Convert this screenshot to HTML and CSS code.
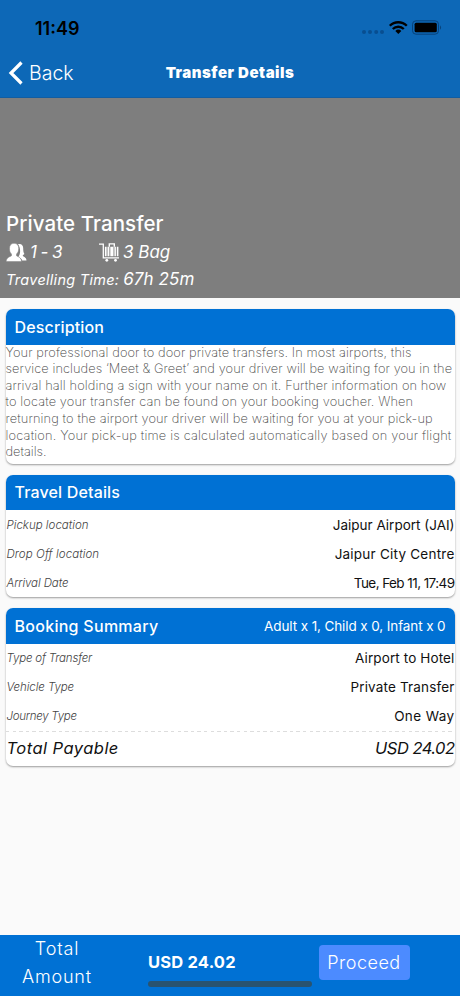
FILE: index.html
```html
<!DOCTYPE html>
<html lang="en">
<head>
<meta charset="utf-8">
<title>Transfer Details</title>
<link rel="stylesheet" href="styles.css">
</head>
<body>
<div class="screen">
  <header class="top">
    <div class="status">
      <span class="clock">11:49</span>
      <svg class="indicators" width="80" height="16" viewBox="0 0 80 16">
        <g fill="#084e91"><circle cx="3" cy="12" r="2"/><circle cx="9" cy="12" r="2"/><circle cx="15.200" cy="12" r="2"/><circle cx="21" cy="12" r="2"/></g>
        <g fill="none" stroke="#000" stroke-width="2.300"><path d="M28.800 5.800a12 12 0 0 1 17 0"/><path d="M31.800 9a7.800 7.800 0 0 1 11 0"/></g>
        <path d="M34.300 10.900a4.300 4.300 0 0 1 6 0l-3 3.100z"/>
        <rect x="51.500" y=".8" width="26" height="13.400" rx="3.500" fill="none" stroke="#07427a"/>
        <rect x="53.600" y="2.800" width="22.200" height="9.500" rx="1.500"/>
        <path d="M79 5.200q2.200 2.300 0 4.600z" fill="#07427a"/>
      </svg>
    </div>
    <div class="nav">
      <div class="back">
        <svg width="14" height="24" viewBox="0 0 14 24"><path d="M12.500 1.500L2 12l10.500 10.500" fill="none" stroke="#fff" stroke-width="3.200"/></svg>
        <span class="back-text">Back</span>
      </div>
      <h1 class="title">Transfer Details</h1>
    </div>
  </header>
  <section class="hero">
    <h2 class="hero-title">Private Transfer</h2>
    <div class="capacity">
      <svg class="people" width="21" height="19" viewBox="0 0 21 19" fill="#fff">
        <path d="M12 1.300c3-1 5.200.7 5.200 4 0 2.300.2 3.900 1 5.200.5.800-.8 1.400-1.500 1.800 0 1.500 3.700 1.700 3.800 5.200h-4.300c-.4-2-2.600-2.600-3.800-3.700 2-2.500 2.700-8.500-.4-12.500z"/>
        <path d="M8 .3c3.200 0 4.700 2.100 4.700 5 0 2.700-.8 4.400-2.200 5.700v1.700c1.600 1.200 4.900 1.500 5 5.900H.2c.1-4.400 3.700-4.700 5.300-5.900V11C4 9.700 3.500 8 3.500 5.300 3.500 2.400 5 .3 8 .3z" stroke="#7e7e7e" stroke-width=".5"/>
      </svg>
      <span class="pax">1 - 3</span>
      <svg class="luggage" width="21" height="19" viewBox="0 0 21 19" fill="#fff">
        <path d="M0 1.200h4.300v13.600H20" fill="none" stroke="#fff" stroke-width="1.300"/>
        <path d="M5.900 3.800h1.700v9.500H5.900zM8.500 3.800h1.900v9.500H8.500zM11.300 3.800h3.200v9.500h-3.200zM15.400 3.800h1.500v9.500h-1.500zM17.800 3.800h1.600v9.500h-1.600z"/>
        <path d="M10.300 3.800V.9h5v2.900" fill="none" stroke="#fff" stroke-width="1.400"/>
        <circle cx="7.800" cy="17.300" r="1.400"/><circle cx="16.500" cy="17.300" r="1.400"/>
      </svg>
      <span class="bags">3 Bag</span>
    </div>
    <div class="travel"><span class="travel-label">Travelling Time:</span><span class="travel-time">67h 25m</span></div>
  </section>
  <main class="content">
    <section class="card">
      <div class="card-head"><h3 class="h-desc">Description</h3></div>
      <p class="desc"><span class="l1">Your professional door to door private transfers. In most airports, this</span><br>
      <span class="l2">service includes ‘Meet &amp; Greet’ and your driver will be waiting for you in the</span><br>
      <span class="l3">arrival hall holding a sign with your name on it. Further information on how</span><br>
      <span class="l4">to locate your transfer can be found on your booking voucher. When</span><br>
      <span class="l5">returning to the airport your driver will be waiting for you at your pick-up</span><br>
      <span class="l6">location. Your pick-up time is calculated automatically based on your flight</span><br>
      <span class="l7">details.</span></p>
    </section>
    <section class="card">
      <div class="card-head"><h3 class="h-travel">Travel Details</h3></div>
      <dl class="rows">
        <div class="row"><dt class="k1">Pickup location</dt><dd class="v1">Jaipur Airport (JAI)</dd></div>
        <div class="row"><dt class="k2">Drop Off location</dt><dd class="v2">Jaipur City Centre</dd></div>
        <div class="row"><dt class="k3">Arrival Date</dt><dd class="v3">Tue, Feb 11, 17:49</dd></div>
      </dl>
    </section>
    <section class="card">
      <div class="card-head"><h3 class="h-book">Booking Summary</h3><span class="guests">Adult x 1, Child x 0, Infant x 0</span></div>
      <dl class="rows">
        <div class="row"><dt class="k4">Type of Transfer</dt><dd class="v4">Airport to Hotel</dd></div>
        <div class="row"><dt class="k5">Vehicle Type</dt><dd class="v5">Private Transfer</dd></div>
        <div class="row"><dt class="k6">Journey Type</dt><dd class="v6">One Way</dd></div>
        <div class="row total"><dt>Total Payable</dt><dd>USD 24.02</dd></div>
      </dl>
    </section>
  </main>
  <footer class="bar">
    <div class="bar-label">Total<br>Amount</div>
    <div class="bar-price">USD 24.02</div>
    <button class="proceed">Proceed</button>
    <div class="home-indicator"></div>
  </footer>
</div>
</body>
</html>
```
FILE: styles.css
```css
* { box-sizing: border-box; }
body { margin: 0; font-family: Inter, "Open Sans", sans-serif; background: #fafafa; color: #111; }
h1, h2, h3, p, dl, dd { margin: 0; font-weight: 400; }
span, h1, h2, h3, dt, dd { white-space: nowrap; }
svg { display: block; flex: none; overflow: visible; }
.screen { width: 460px; height: 996px; display: flex; flex-direction: column; background: #fafafa; }

.top { height: 98px; flex: none; background: #0d68b7; border-bottom: 1px solid #125da1; }
.status { height: 48px; padding: 8px 19px 0 35px; display: flex; justify-content: space-between; align-items: center; }
.clock { font-size: 18px; font-weight: 600; color: #000; letter-spacing: 0; }
.nav { height: 49px; display: grid; grid-template-columns: 1fr auto 1fr; align-items: center; color: #fff; }
.back { display: flex; align-items: center; gap: 6px; padding-left: 9px; }
.back-text { font-size: 19.5px; font-weight: 300; }
.title { font-size: 15px; font-weight: 900; letter-spacing: .52px; }

.hero { height: 200px; flex: none; background: #7e7e7e; color: #fff; padding: 111px 6px 0; }
.hero-title { font-size: 20.5px; line-height: 29px; font-weight: 500; letter-spacing: .08px; }
.capacity { height: 28px; display: flex; align-items: center; font-size: 17px; font-style: italic; }
.pax { margin-left: 3px; width: 69px; letter-spacing: -.6px; }
.bags { margin-left: 3px; }
.travel { height: 26px; line-height: 26px; display: flex; align-items: baseline; gap: 4px; font-style: italic; }
.travel-label { font-size: 14.5px; letter-spacing: .27px; }
.travel-time { font-size: 17px; letter-spacing: .1px; }

.content { flex: 1; padding: 11px 5.5px 0; display: flex; flex-direction: column; gap: 11px; }
.card { background: #fff; border-radius: 7px; box-shadow: 0 1px 2px rgba(0,0,0,.38); }
.card-head { height: 35.5px; padding: 0 9px; display: flex; align-items: center; justify-content: space-between; background: #0071d4; border-radius: 7px 7px 0 0; color: #fff; }
.card-head h3 { font-size: 16px; font-weight: 500; letter-spacing: .16px; }
.card-head .h-book { letter-spacing: .28px; }
.guests { font-size: 13.5px; letter-spacing: -.11px; }
.desc { height: 119px; font-size: 12.8px; line-height: 16.66px; font-weight: 200; color: #444; }
.l1 { letter-spacing: .1px; }
.l2 { letter-spacing: .08px; }
.l3 { letter-spacing: .11px; }
.l4 { letter-spacing: .12px; }
.l5 { letter-spacing: .11px; }
.l6 { letter-spacing: .19px; }
.rows { height: 87px; }
.rows:has(.total) { height: 122.5px; }
.row { height: 29px; display: flex; justify-content: space-between; align-items: center; }
.row dt { font-size: 11.5px; font-weight: 300; font-style: italic; color: #444; padding-left: 1px; }
.row dd { font-size: 13.5px; color: #111; }
.row .k2 { letter-spacing: .08px; }
.row .k3 { letter-spacing: -.1px; }
.row .k4 { letter-spacing: -.18px; }
.row .k5 { letter-spacing: -.08px; }
.row .k6 { letter-spacing: -.28px; }
.row .v2 { letter-spacing: .23px; }
.row .v3 { letter-spacing: -.57px; }
.row .v4 { letter-spacing: .12px; }
.row .v5 { letter-spacing: .16px; }
.row .v6 { letter-spacing: .4px; }
.total { height: 35px; background: repeating-linear-gradient(90deg, #ddd 0 3.5px, transparent 3.5px 6.6px) top / 100% 1px no-repeat; }
.total dt, .total dd { font-size: 16.5px; font-style: italic; font-weight: 400; color: #111; }
.total dt { letter-spacing: .46px; }
.total dd { letter-spacing: -.52px; }

.bar { height: 61.5px; flex: none; background: #0071d4; color: #fff; position: relative; display: flex; align-items: center; }
.bar-label { width: 114px; margin-top: -5px; text-align: center; font-size: 18px; line-height: 28px; font-weight: 300; letter-spacing: .8px; }
.bar-price { width: 170.5px; padding-left: 34px; margin: -6px 34px 0 0; font-size: 16.5px; font-weight: 700; letter-spacing: .2px; white-space: nowrap; }
.proceed { width: 91px; height: 35px; margin-top: -6px; padding: 0; border: 0; border-radius: 4px; background: #4c8bff; color: #fff; font: 300 18px Inter, sans-serif; letter-spacing: .5px; }
.home-indicator { position: absolute; left: 148px; bottom: 9px; width: 164px; height: 6px; border-radius: 3px; background: #29536f; }
```
